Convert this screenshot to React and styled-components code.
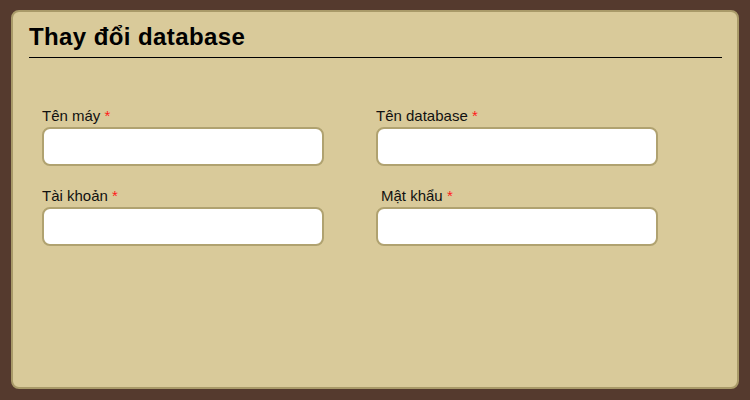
import React from "react";
import styled, { createGlobalStyle } from "styled-components";

const Global = createGlobalStyle`
  html, body { margin: 0; padding: 0; background: #553a2e; }
  body { font-family: "Liberation Sans", Arial, sans-serif; }
  * { box-sizing: border-box; }
`;

const Page = styled.div`
  padding: 10px 11px 10px 11px;
  height: 400px;
`;

const Panel = styled.div`
  height: 379px;
  background: #d9ca9a;
  border: 2px solid #a99a69;
  border-radius: 8px;
  padding: 11px 15px 0 16px;
`;

const Title = styled.h1`
  margin: 0;
  font-size: 24px;
  line-height: 28px;
  letter-spacing: 0.4px;
  font-weight: bold;
  color: #000;
  padding-bottom: 6px;
  border-bottom: 1px solid #000;
`;

const Form = styled.div`
  margin: 50px 0 0 13px;
  display: grid;
  grid-template-columns: 282px 282px;
  column-gap: 52px;
  row-gap: 22px;
`;

const Field = styled.div`
  display: flex;
  flex-direction: column;
  gap: 3px;
`;

const Label = styled.label`
  font-size: 15px;
  line-height: 16px;
  color: #111;
  padding-left: ${(p) => p.$indent || 0}px;
`;

const Star = styled.span`
  color: #ff1a1a;
`;

const Input = styled.input`
  height: 39px;
  width: 100%;
  background: #fff;
  border: 2px solid #b0a270;
  border-radius: 8px;
  outline: none;
  font-family: inherit;
  font-size: 14px;
  padding: 0 8px;
`;

const fields = [
  { label: "Tên máy", indent: 0 },
  { label: "Tên database", indent: 0 },
  { label: "Tài khoản", indent: 0 },
  { label: "Mật khẩu", indent: 5 },
];

export default function App() {
  return (
    <>
      <Global />
      <Page>
        <Panel>
          <Title>Thay đổi database</Title>
          <Form>
            {fields.map((f) => (
              <Field key={f.label}>
                <Label $indent={f.indent}>
                  {f.label} <Star>*</Star>
                </Label>
                <Input type={f.label === "Mật khẩu" ? "password" : "text"} />
              </Field>
            ))}
          </Form>
        </Panel>
      </Page>
    </>
  );
}
